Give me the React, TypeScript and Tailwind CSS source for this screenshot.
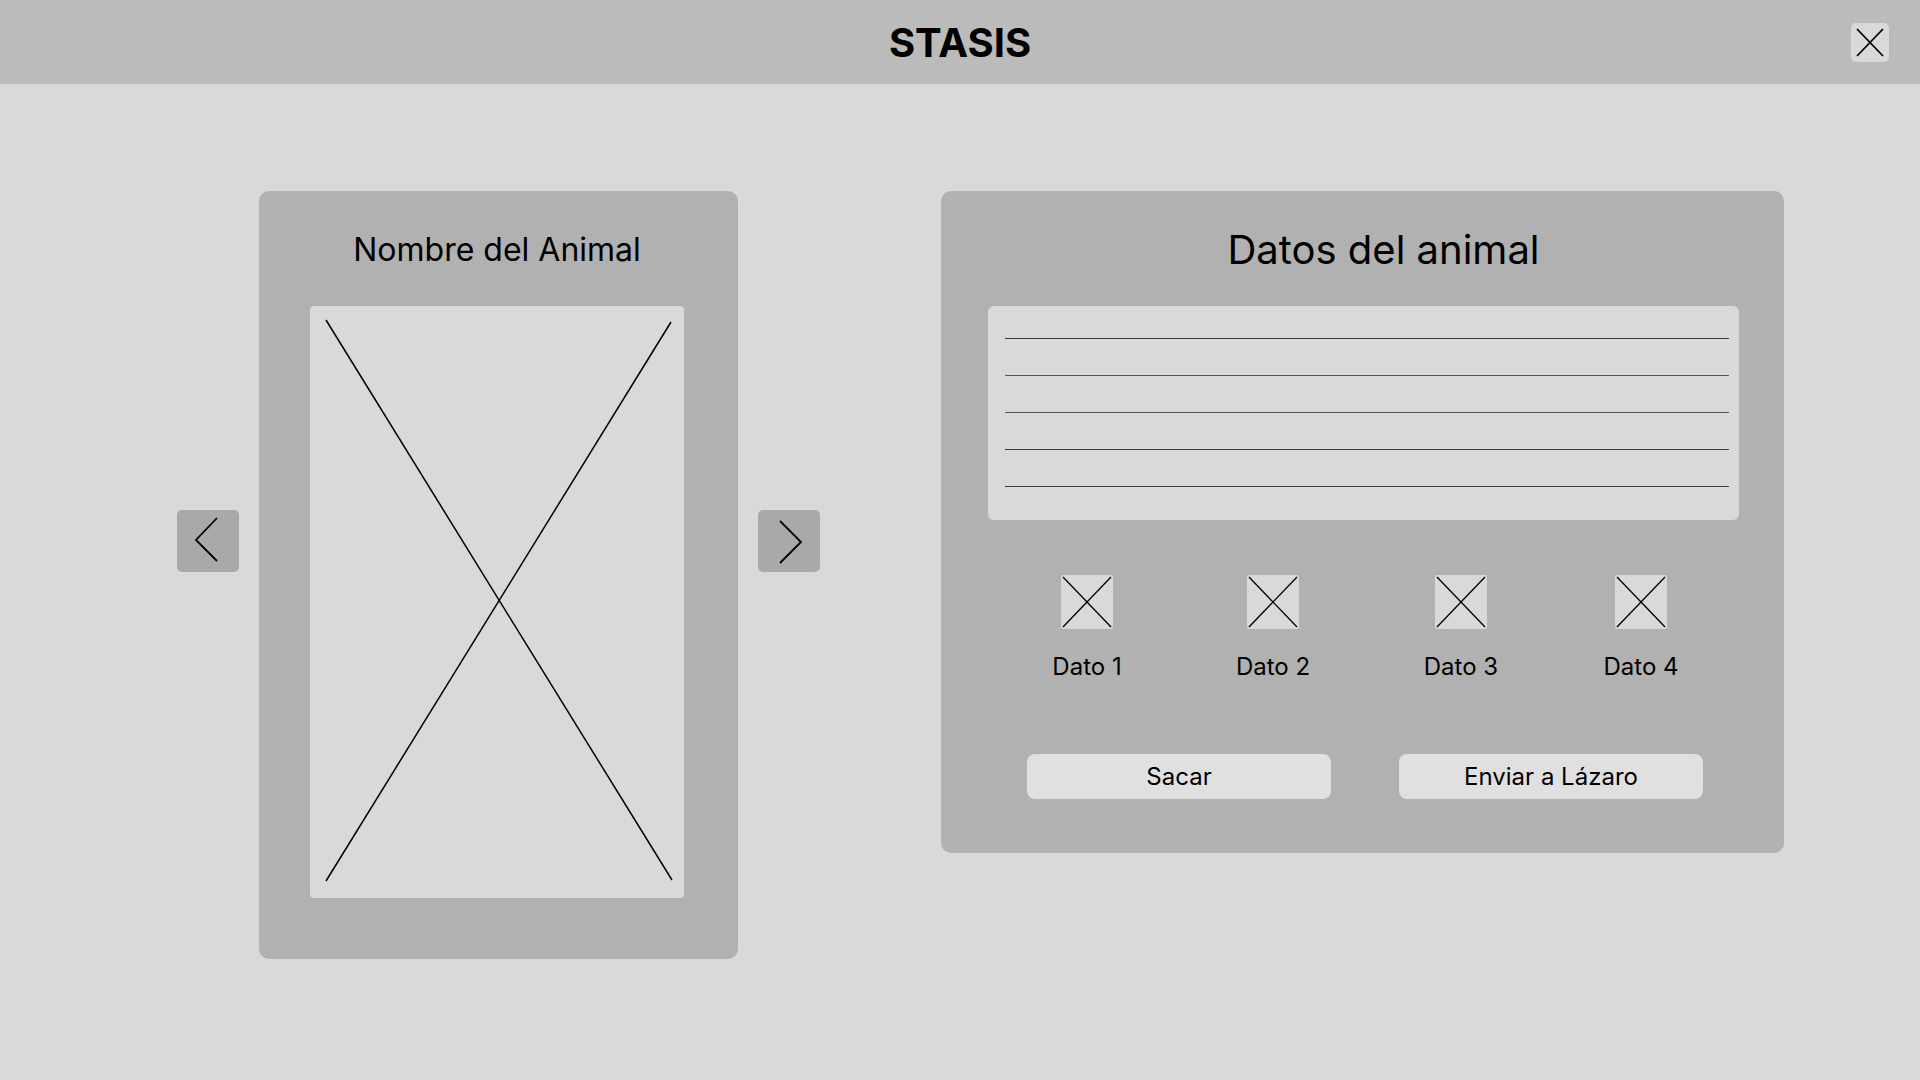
import React from "react";

function XBox({ w, h, inset = 2, stroke = 1.5 }: { w: number; h: number; inset?: number; stroke?: number }) {
  return (
    <svg width={w} height={h} viewBox={`0 0 ${w} ${h}`} className="block">
      <line x1={inset} y1={inset} x2={w - inset} y2={h - inset} stroke="#000" strokeWidth={stroke} />
      <line x1={w - inset} y1={inset} x2={inset} y2={h - inset} stroke="#000" strokeWidth={stroke} />
    </svg>
  );
}

function Arrow({ dir }: { dir: "left" | "right" }) {
  return (
    <button
      className={
        dir === "left"
          ? "mt-[319px] flex h-[62px] w-[62px] shrink-0 items-center justify-center rounded-[5px] bg-[#a9a9a9]"
          : "ml-[20px] mt-[319px] flex h-[62px] w-[62px] shrink-0 items-center justify-center rounded-[5px] bg-[#a9a9a9]"
      }
    >
      <svg width="62" height="62" viewBox="0 0 62 62" className="block">
        {dir === "left" ? (
          <polyline points="40,8 19,30 40,51" fill="none" stroke="#000" strokeWidth="1.8" />
        ) : (
          <polyline points="22,11 43,32 22,53" fill="none" stroke="#000" strokeWidth="1.8" />
        )}
      </svg>
    </button>
  );
}

const datos = [
  { label: "Dato 1", cls: "flex w-[120px] flex-col items-center" },
  { label: "Dato 2", cls: "ml-[66px] flex w-[120px] flex-col items-center" },
  { label: "Dato 3", cls: "ml-[68px] flex w-[120px] flex-col items-center" },
  { label: "Dato 4", cls: "ml-[60px] flex w-[120px] flex-col items-center" },
];

export default function App() {
  return (
    <div
      className="min-h-screen w-full bg-[#d9d9d9] text-black"
      style={{ fontFamily: "Inter, 'Noto Sans', 'Liberation Sans', sans-serif" }}
    >
      <header className="grid h-[84px] grid-cols-[1fr_auto_1fr] items-center bg-[#bbbbbb]">
        <div />
        <h1 className="pt-[2px] text-[40px] font-bold leading-[48px]">STASIS</h1>
        <div className="flex justify-end pr-[31px]">
          <button className="flex h-[39px] w-[38px] items-center justify-center rounded-[5px] bg-[#d9d9d9]">
            <svg width="38" height="39" viewBox="0 0 38 39" className="block">
              <line x1="6" y1="6" x2="32" y2="33" stroke="#000" strokeWidth="1.8" />
              <line x1="32" y1="6" x2="6" y2="33" stroke="#000" strokeWidth="1.8" />
            </svg>
          </button>
        </div>
      </header>

      <main className="flex items-start pl-[177px] pt-[107px]">
        <Arrow dir="left" />

        <section className="ml-[20px] flex h-[768px] w-[479px] shrink-0 flex-col items-center rounded-[10px] bg-[#b1b1b1] pl-[51px] pr-[54px] pt-[41px]">
          <h2 className="text-[32px] font-normal leading-[36px]">Nombre del Animal</h2>
          <div className="mt-[38px] h-[592px] w-[374px] rounded-[4px] bg-[#d9d9d9]">
            <svg width="374" height="592" viewBox="0 0 374 592" className="block">
              <line x1="16" y1="14" x2="362" y2="574" stroke="#000" strokeWidth="1.5" />
              <line x1="361" y1="16" x2="16" y2="575" stroke="#000" strokeWidth="1.5" />
            </svg>
          </div>
        </section>

        <Arrow dir="right" />

        <section className="ml-[121px] flex w-[843px] shrink-0 flex-col rounded-[10px] bg-[#b1b1b1] pb-[54px] pt-[36px]">
          <h2 className="pl-[42px] text-center text-[40px] font-normal leading-[46px]">Datos del animal</h2>

          <div className="ml-[47px] mt-[33px] flex h-[214px] w-[751px] flex-col gap-[36px] rounded-[6px] bg-[#d9d9d9] pl-[17px] pr-[10px] pt-[32px]">
            <div className="h-px w-full bg-[#3a3a3a]" />
            <div className="h-px w-full bg-[#555555]" />
            <div className="h-px w-full bg-[#555555]" />
            <div className="h-px w-full bg-[#3a3a3a]" />
            <div className="h-px w-full bg-[#3a3a3a]" />
          </div>

          <div className="mt-[55px] flex pl-[86px]">
            {datos.map((d) => (
              <div key={d.label} className={d.cls}>
                <div className="h-[54px] w-[52px] rounded-[2px] bg-[#d9d9d9]">
                  <XBox w={52} h={54} inset={2} stroke={1.3} />
                </div>
                <span className="mt-[23px] text-[24px] leading-[29px]">{d.label}</span>
              </div>
            ))}
          </div>

          <div className="mt-[73px] flex justify-center gap-[68px] pl-[5px]">
            <button className="h-[45px] w-[304px] rounded-[8px] bg-[#e0e0e0] text-[24px] leading-[29px]">Sacar</button>
            <button className="h-[45px] w-[304px] rounded-[8px] bg-[#e0e0e0] text-[24px] leading-[29px]">Enviar a Lázaro</button>
          </div>
        </section>
      </main>
    </div>
  );
}
